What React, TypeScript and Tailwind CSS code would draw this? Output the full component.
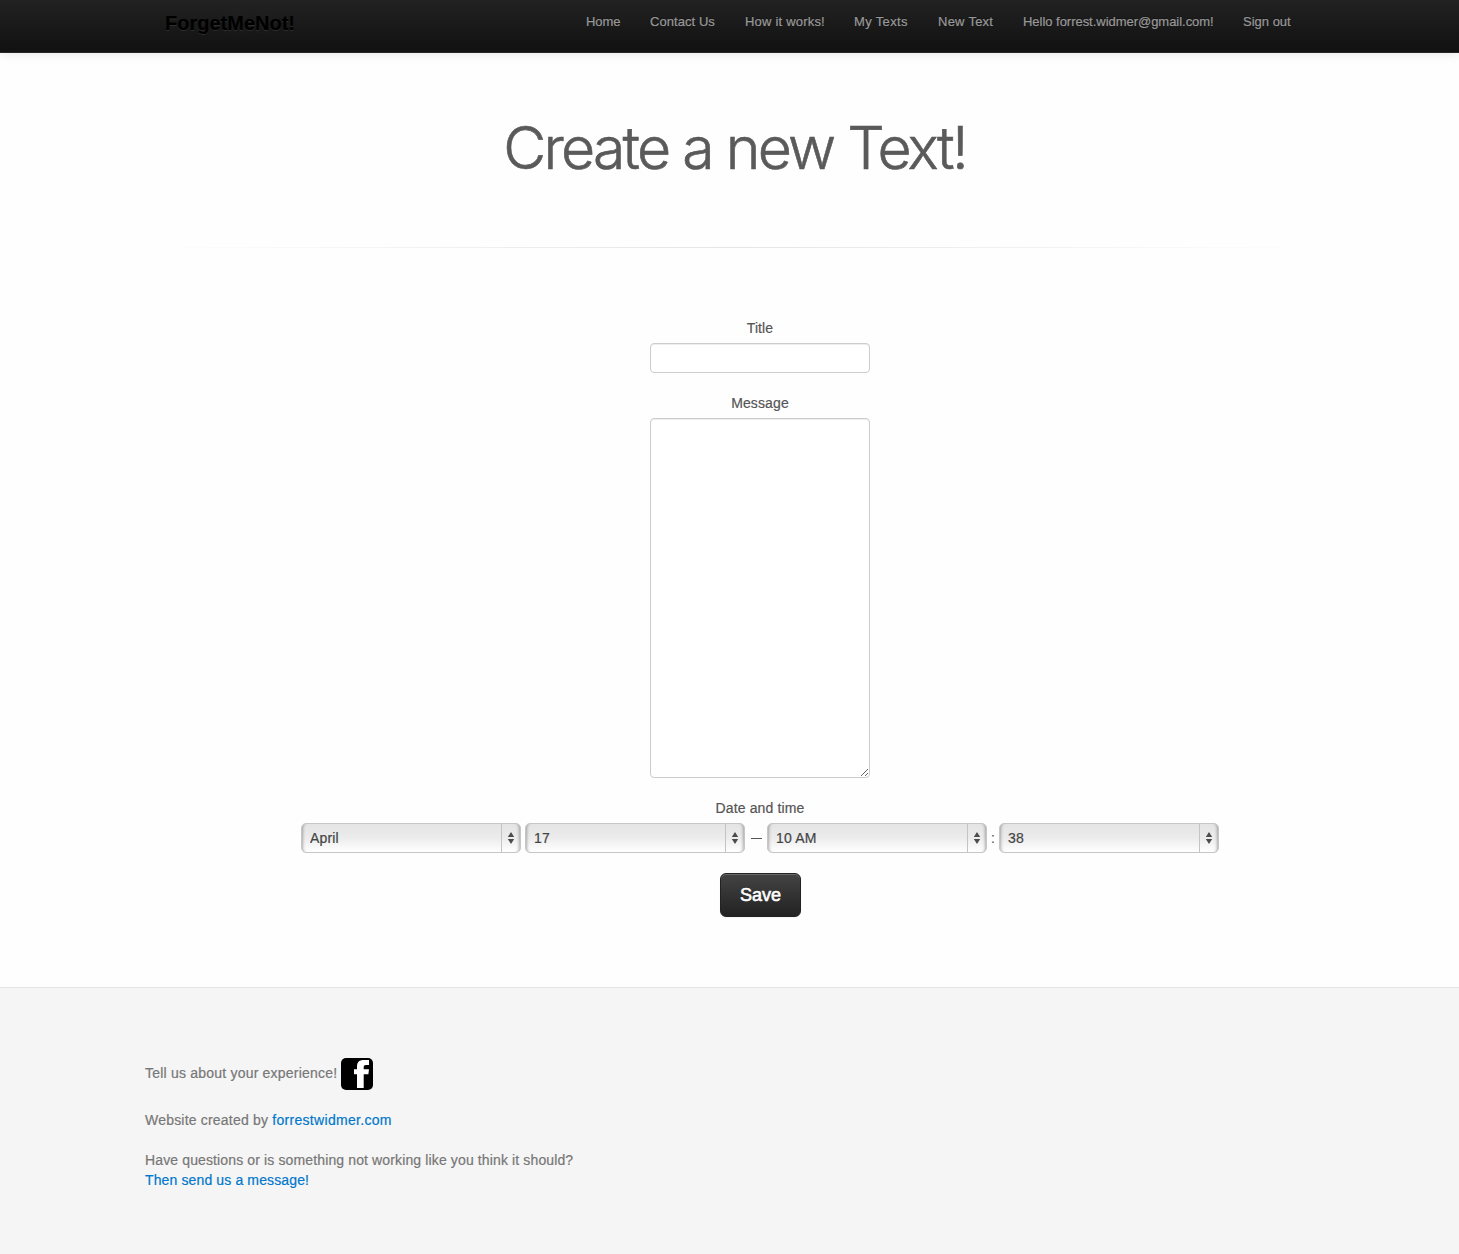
const navItems = [
  { label: 'Home', style: 'w-[34px] tracking-[-0.1px]' },
  { label: 'Contact Us', style: 'w-[65px] tracking-[0.06px]' },
  { label: 'How it works!', style: 'w-[79px] tracking-[0.2px]' },
  { label: 'My Texts', style: 'w-[54px] tracking-[0.35px]' },
  { label: 'New Text', style: 'w-[55px] tracking-[0.25px]' },
  { label: 'Hello forrest.widmer@gmail.com!', style: 'w-[190px] tracking-[-0.03px]' },
  { label: 'Sign out', style: 'w-[47px] tracking-[0px]' },
];

function Navbar() {
  return (
    <header className="relative h-[53px] border-b border-[#252525] bg-linear-to-b from-[#222222] to-[#111111] shadow-[0_1px_10px_rgba(0,0,0,0.1)]">
      <div className="mx-auto flex w-[1169px] justify-between pr-6 pl-5">
        <a className="pt-[13px] text-[20px] leading-5 font-bold text-black [text-shadow:0_1px_0_rgba(255,255,255,0.1),0_0_30px_rgba(255,255,255,0.125)]">
          ForgetMeNot!
        </a>
        <nav className="flex gap-[30px] pt-3 text-[13px] leading-5 text-[#999999] [-webkit-text-stroke:0.2px_#999999] [text-shadow:0_-1px_0_rgba(0,0,0,0.25)]">
          {navItems.map((item) => (
            <a key={item.label} className={`block whitespace-nowrap ${item.style}`}>
              {item.label}
            </a>
          ))}
        </nav>
      </div>
    </header>
  );
}

function Select({ value }: { value: string }) {
  return (
    <div className="relative h-[30px] w-[220px] rounded-[5px] border border-[#c6c6c6] bg-linear-to-b from-[#e4e4e4] via-[#ececec] to-white shadow-[inset_4px_0_3px_-3px_rgba(0,0,0,0.3),inset_-4px_0_3px_-3px_rgba(0,0,0,0.3)]">
      <select className="block h-7 w-full appearance-none bg-transparent pl-2 text-[14px] leading-5 tracking-[0.15px] text-[#444444] outline-none" defaultValue={value}>
        <option>{value}</option>
      </select>
      <span className="pointer-events-none absolute top-0 right-0 flex h-7 w-[19px] items-center justify-center border-l border-[#c4c4c4]">
        <svg width="8" height="12" viewBox="0 0 8 12" fill="#4c4c4c">
          <path d="M4 0 7.200 5H.8zM4 12 7.200 7H.8z" />
        </svg>
      </span>
    </div>
  );
}

export default function App() {
  return (
    <div className="flex min-h-[1254px] flex-col bg-[#fefefe] font-['Liberation_Sans',Arial,sans-serif] text-[14px] leading-5 text-[#555555] [-webkit-text-stroke-width:0.2px]">
      <Navbar />
      <main className="mx-auto h-[934px] w-[1169px]">
        <h1 className="pt-[65px] pl-[10px] text-center font-['Inter',sans-serif] text-[59px] leading-[60px] font-light tracking-[-2.75px] whitespace-nowrap text-[#5a5a5a] [-webkit-text-stroke:0.6px_#5a5a5a]">
          Create a new Text!
        </h1>
        <div className="mt-[69px] h-px bg-linear-to-r from-transparent via-black/10 to-transparent" />
        <form className="flex flex-col items-center pt-[70px] pl-[61px]">
          <label className="mb-[5px] tracking-[0.1px]">Title</label>
          <input className="h-[30px] w-[220px] rounded border border-[#cccccc] bg-white px-1.5 shadow-[inset_0_1px_1px_rgba(0,0,0,0.075)]" />
          <label className="mt-5 mb-[5px] tracking-[0.12px]">Message</label>
          <textarea className="h-[360px] w-[220px] resize rounded border border-[#cccccc] bg-white px-1.5 shadow-[inset_0_1px_1px_rgba(0,0,0,0.075)]" />
          <label className="mt-5 mb-[5px] tracking-[0.15px]">Date and time</label>
          <div className="flex items-center">
            <Select value="April" />
            <span className="w-1" />
            <Select value="17" />
            <span className="flex w-[22px] justify-center">
              <span className="h-px w-[11px] bg-[#555555]" />
            </span>
            <Select value="10 AM" />
            <span className="w-3 text-center">:</span>
            <Select value="38" />
          </div>
          <button
            type="button"
            className="mt-5 ml-px h-11 w-[81px] rounded-md border border-[#222222] bg-linear-to-b from-[#444444] to-[#222222] text-[18px] leading-5 text-white [-webkit-text-stroke:0.6px_white] shadow-[inset_0_1px_0_rgba(255,255,255,0.2),0_1px_2px_rgba(0,0,0,0.05)] [text-shadow:0_-1px_0_rgba(0,0,0,0.25)]"
          >
            Save
          </button>
        </form>
      </main>
      <footer className="flex-1 border-t border-[#e5e5e5] bg-[#f5f5f5] pt-[70px] text-[#777777]">
        <div className="mx-auto w-[1169px]">
          <p className="flex h-8 items-start gap-1">
            <span className="w-[192px] pt-[5px] tracking-[0.21px] whitespace-nowrap">Tell us about your experience!</span>
            <svg width="32" height="32" viewBox="0 0 32 32">
              <rect width="32" height="32" rx="5" fill="#000" />
              <path d="M16 30V16.300h-3v-5.100h3V8.500C16 4 18.500 2 22.500 2H28v5h-3c-1.700 0-2.300.8-2.300 2.200v2H28l-.6 5.100h-4.700V30z" fill="#fff" />
            </svg>
          </p>
          <p className="mt-5 tracking-[0.2px]">
            Website created by <a className="tracking-[0.3px] text-[#0077cc]">forrestwidmer.com</a>
          </p>
          <p className="mt-5 tracking-[0.13px]">
            Have questions or is something not working like you think it should?
            <br />
            <a className="text-[#0077cc]">Then send us a message!</a>
          </p>
        </div>
      </footer>
    </div>
  );
}
